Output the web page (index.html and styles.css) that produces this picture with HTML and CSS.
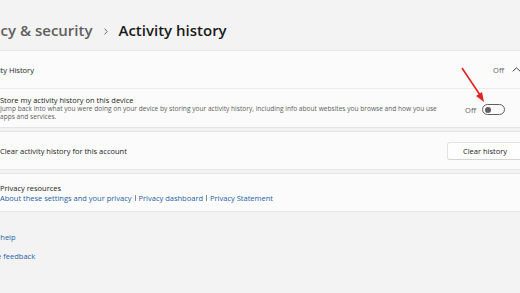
FILE: index.html
```html
<!DOCTYPE html>
<html lang="en">
<head>
    <meta charset="UTF-8">
    <title>Activity history</title>
    <link rel="stylesheet" href="styles.css">
</head>
<body>
    <div class="page">
        <div class="breadcrumb">
            <span class="crumb">Privacy &amp; security</span>
            <svg class="crumb-sep" width="4" height="7" viewBox="0 0 4 7"><path d="M0.6 0.6 L3.2 3.5 L0.6 6.4" fill="none" stroke="#6b6b6b" stroke-width="1"/></svg>
            <span class="title">Activity history</span>
        </div>

        <div class="card expander">
            <div class="row expander-head">
                <span class="label head-label">Activity History</span>
                <div class="controls">
                    <span class="state">Off</span>
                    <svg class="chevron" width="9" height="5" viewBox="0 0 9 5"><path d="M0.7 4.4 L4.5 0.8 L8.3 4.4" fill="none" stroke="#444" stroke-width="1"/></svg>
                </div>
            </div>
            <div class="row expander-body">
                <div class="text">
                    <div class="label">Store my activity history on this device</div>
                    <div class="desc">Jump back into what you were doing on your device by storing your activity history, including info about websites you browse and how you use apps and services.</div>
                </div>
                <div class="controls toggle-wrap">
                    <span class="state">Off</span>
                    <span class="toggle"><span class="knob"></span></span>
                </div>
            </div>
        </div>

        <div class="card">
            <div class="row plain">
                <span class="label">Clear activity history for this account</span>
                <button class="button">Clear history</button>
            </div>
        </div>

        <div class="card">
            <div class="row plain">
                <div class="text">
                    <div class="label">Privacy resources</div>
                    <div class="links">
                        <a href="#">About these settings and your privacy</a><span class="sep"></span><a href="#">Privacy dashboard</a><span class="sep"></span><a href="#">Privacy Statement</a>
                    </div>
                </div>
            </div>
        </div>

        <div class="footer-links">
            <a href="#">Get help</a>
            <a href="#">Give feedback</a>
        </div>
    </div>

    <svg class="arrow" width="40" height="50" viewBox="0 0 40 50">
        <line x1="3" y1="3" x2="21" y2="30" stroke="#e0241f" stroke-width="1.6"/>
        <polygon points="25,37 17,31 23,27" fill="#e0241f"/>
    </svg>
</body>
</html>
```

FILE: styles.css
```css
* {
    margin: 0;
    padding: 0;
    box-sizing: border-box;
}

body {
    font-family: 'Open Sans', 'Noto Sans', sans-serif;
    background-color: #f3f3f3;
    color: #1b1b1b;
    overflow: hidden;
    height: 293px;
}

.page {
    margin-left: -16px;
    width: 551px;
}

.breadcrumb {
    display: flex;
    align-items: flex-start;
    height: 50px;
    padding-top: 20px;
    margin-left: -20px;
    font-size: 15px;
    font-weight: 600;
    line-height: 20px;
}

.crumb {
    color: #5f5f5f;
}

.crumb-sep {
    margin: 8px 11px 0 11px;
}

.title {
    color: #1b1b1b;
}

.card {
    background-color: #fbfbfb;
    border: 1px solid #e5e5e5;
    border-radius: 3px;
    margin-bottom: 3px;
}

.row {
    display: flex;
    align-items: center;
    justify-content: space-between;
    padding-left: 15px;
}

.label {
    font-size: 7.5px;
    line-height: 10px;
}

.desc {
    font-size: 6.6px;
    line-height: 8px;
    color: #5d5d5d;
}

.expander-head {
    height: 38px;
    padding-right: 13px;
    border-bottom: 1px solid #ececec;
}

.head-label {
    margin-left: -18px;
}

.expander-body {
    height: 38px;
    padding-right: 29px;
}

.expander-body .text {
    width: 445px;
}

.controls {
    display: flex;
    align-items: center;
}

.state {
    font-size: 7.5px;
    line-height: 10px;
    color: #5d5d5d;
    margin-right: 8px;
}

.toggle-wrap {
    margin-top: 3px;
}

.toggle-wrap .state {
    margin-right: 6px;
}

.toggle {
    display: flex;
    align-items: center;
    width: 23px;
    height: 11px;
    border: 1px solid #5f5f5f;
    border-radius: 6px;
    padding-left: 2px;
}

.knob {
    width: 6px;
    height: 6px;
    border-radius: 50%;
    background-color: #5f5f5f;
}

.plain {
    height: 37px;
    padding-right: 11px;
}

.button {
    font-family: inherit;
    font-size: 7.5px;
    line-height: 10px;
    color: #1b1b1b;
    background-color: #fefefe;
    border: 1px solid #e3e3e3;
    border-bottom-color: #d4d4d4;
    border-radius: 3px;
    height: 18px;
    padding: 0 15px;
}

.links {
    display: flex;
    align-items: center;
    font-size: 7.5px;
    line-height: 10px;
}

.links a, .footer-links a {
    color: #1c5fa6;
    text-decoration: none;
}

.sep {
    width: 1px;
    height: 6px;
    background-color: #8a8a8a;
    margin: 0 3px;
}

.footer-links {
    display: flex;
    flex-direction: column;
    gap: 9px;
    margin-top: 20px;
    margin-left: 2px;
    font-size: 7.5px;
    line-height: 10px;
}

.arrow {
    position: absolute;
    left: 459px;
    top: 65px;
}
```
